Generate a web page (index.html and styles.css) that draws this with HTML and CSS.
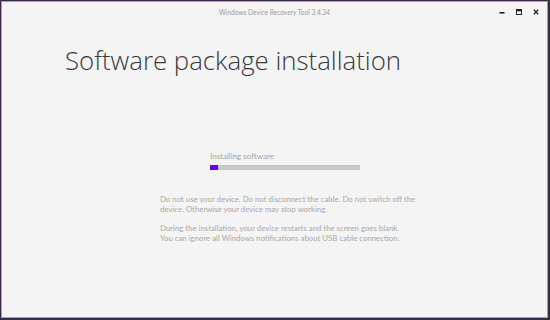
FILE: index.html
```html
<!DOCTYPE html>
<html>
<head>
<meta charset="utf-8">
<link rel="stylesheet" href="styles.css">
</head>
<body>
<div class="window">
  <div class="titlebar">
    <div class="title">Windows Device Recovery Tool 3.4.34</div>
    <div class="controls">
      <svg class="ctl" width="8" height="8" viewBox="0 0 8 8"><rect x="1.5" y="4" width="5" height="1.6" fill="#222"/></svg>
      <svg class="ctl" width="8" height="8" viewBox="0 0 8 8"><rect x="1.5" y="1.5" width="5" height="5" fill="none" stroke="#222" stroke-width="1"/><rect x="1.5" y="1.5" width="5" height="1.8" fill="#222"/></svg>
      <svg class="ctl" width="8" height="8" viewBox="0 0 8 8"><path d="M1.8 1.8L6.2 6.2M6.2 1.8L1.8 6.2" stroke="#222" stroke-width="1.3"/></svg>
    </div>
  </div>
  <h1 class="heading">Software package installation</h1>
  <div class="progress">
    <div class="plabel">Installing software</div>
    <div class="track"><div class="fill" style="width:8px"></div></div>
  </div>
  <div class="info">
    <p>Do not use your device. Do not disconnect the cable. Do not switch off the device. Otherwise your device may stop working.</p>
    <p>During the installation, your device restarts and the screen goes blank.<br>You can ignore all Windows notifications about USB cable connection.</p>
  </div>
</div>
</body>
</html>
```
FILE: styles.css
```css
html, body {
  margin: 0;
  padding: 0;
}
body {
  width: 550px;
  height: 320px;
  background: #3b2b48;
  padding: 1px;
  box-sizing: border-box;
  font-family: "Lato", "Open Sans", sans-serif;
}
.window {
  width: 547px;
  height: 317px;
  box-sizing: border-box;
  border: 1px solid #b48de9;
  background: #f4f4f4;
  display: flex;
  flex-direction: column;
}
.titlebar {
  height: 20px;
  display: flex;
  align-items: center;
  justify-content: center;
  position: relative;
}
.title {
  font-size: 6.6px;
  color: #9a9a9a;
}
.controls {
  position: absolute;
  right: 7px;
  top: 6px;
  display: flex;
  gap: 9px;
}
.ctl { display: block; }
.heading {
  margin: 20px 0 0 63px;
  font-family: "Open Sans", sans-serif;
  font-weight: 300;
  font-size: 25.8px;
  line-height: 36px;
  color: #3a3a3a;
}
.progress {
  margin: 73px 0 0 208px;
  width: 150px;
}
.plabel {
  font-size: 8px;
  color: #a5a5a5;
  line-height: 11px;
}
.track {
  margin-top: 3px;
  height: 5px;
  background: #c8c8c8;
}
.fill {
  height: 100%;
  background: #6a00e8;
}
.info {
  margin: 24px 0 0 158px;
  width: 256px;
  font-size: 7.8px;
  line-height: 10px;
  color: #a8a8a8;
}
.info p {
  margin: 0 0 9px 0;
}
```
